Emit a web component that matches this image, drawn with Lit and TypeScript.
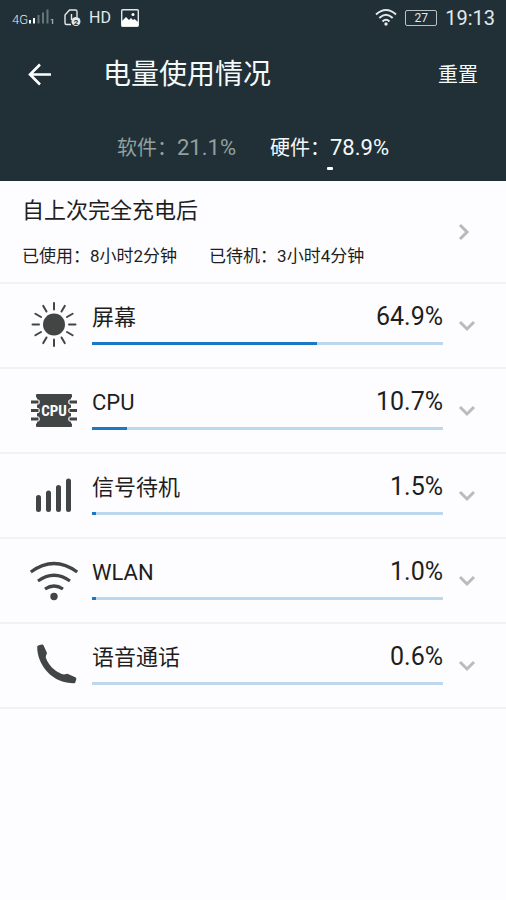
import { LitElement, html, css, svg, nothing } from "lit";
import type { TemplateResult } from "lit";
import { customElement, state } from "lit/decorators.js";
import { classMap } from "lit/directives/class-map.js";
import { styleMap } from "lit/directives/style-map.js";

interface Usage {
  name: string;
  percent: number;
  icon: TemplateResult;
}

const rays = Array.from({ length: 12 }, (_, i) => i * 30);

const screenIcon = html`<svg class="icon" viewBox="0 0 48 48" aria-hidden="true">
  <circle cx="24" cy="23.500" r="11" fill="currentColor" />
  ${rays.map(
    (angle) => svg`<path d="M24 2v6.500" stroke="currentColor" stroke-width="2" stroke-linecap="round" transform="rotate(${angle} 24 23.500)" />`
  )}
</svg>`;

const cpuIcon = html`<svg class="icon" viewBox="0 0 48 48" aria-hidden="true">
  <path d="M7 8h34q1 0 1 1v2l-1 1v25l1 1v2q0 1-1 1H7q-1 0-1-1v-2l1-1V12l-1-1V9q0-1 1-1z" fill="currentColor" />
  <g fill="none" stroke="#fdfcff" stroke-width="5.600" stroke-linecap="round">
    <path d="M2 16h5M2 24.500h5M2 33h5M46 16h-5M46 24.500h-5M46 33h-5" />
  </g>
  <g fill="none" stroke="currentColor" stroke-width="3.200">
    <path d="M1 16h7.500M1 24.500h7.500M1 33h7.500M47 16h-7.500M47 24.500h-7.500M47 33h-7.500" />
  </g>
  <text class="chip" x="24" y="30" text-anchor="middle">CPU</text>
</svg>`;

const signalIcon = html`<svg class="icon" viewBox="0 0 48 48" aria-hidden="true">
  <path d="M8.500 38.500V26.500M18.500 38.500V22M28.500 38.500V16.500M38.500 38.500V10" fill="none" stroke="currentColor" stroke-width="5" stroke-linecap="round" />
</svg>`;

const wlanIcon = html`<svg class="icon" viewBox="0 0 48 48" aria-hidden="true">
  <g fill="none" stroke="currentColor" stroke-width="3.200">
    <path d="M.8 16Q24-1 47.200 16" />
    <path d="M8 25Q24 13.500 40 25" />
    <path d="M15 33Q24 27 33 33" />
  </g>
  <circle cx="24" cy="40.500" r="3.700" fill="currentColor" />
</svg>`;

const callIcon = html`<svg class="icon" viewBox="0 0 48 48" aria-hidden="true">
  <path d="M8.200 4.500 11.700 3.600q1.300-.4 1.900.8l3.200 7.200q.5 1.200-.5 2.100l-.6 2.500C17 21 20.500 25.500 24.500 28.800c3 2.300 6.500 4.300 9.500 4.800l2.200-.6q.8-.4 1.700 0l7.400 3.200q1.300.5 1 1.800L45.400 41.200q-.3 1-1.400 1C35 42.300 24.500 39 17 30.500 10.500 23 7.300 15 7.200 6q0-1.100 1-1.500z" fill="currentColor" />
</svg>`;

const downIcon = html`<svg class="down" viewBox="0 0 18 12" aria-hidden="true">
  <path d="M2 2l7 7 7-7" fill="none" stroke="currentColor" stroke-width="3" />
</svg>`;

@customElement("app-root")
export class AppRoot extends LitElement {
  static styles = css`
    :host {
      display: block;
      min-height: 100vh;
      background: #fdfcff;
      color: #1e1e1e;
      font-family: Roboto, "Noto Sans CJK SC", sans-serif;
    }
    button {
      appearance: none;
      border: 0;
      margin: 0;
      padding: 0;
      background: none;
      color: inherit;
      font: inherit;
      text-align: left;
      cursor: pointer;
    }
    h1 { margin: 0; font-weight: 400; }
    svg { display: block; flex: none; overflow: visible; }
    .head {
      background: #213037;
      color: #f4fafa;
    }
    .status {
      display: flex;
      align-items: center;
      height: 36px;
      padding: 0 11px 0 12px;
      color: #e2e9ea;
    }
    .network { width: 42px; height: 20px; }
    .network-text { font-size: 13px; font-weight: 300; fill: currentColor; }
    .network-index { font-size: 8px; fill: currentColor; }
    .sim { width: 18px; height: 20px; margin-left: 9px; }
    .sim-text { font-size: 8px; font-weight: 700; fill: #213037; }
    .hd { margin-left: 8px; font-size: 16px; line-height: 20px; }
    .photo { width: 18px; height: 18px; margin-left: 10px; }
    .spacer { flex: 1; }
    .wifi { width: 22px; height: 18px; }
    .battery {
      box-sizing: border-box;
      width: 32px;
      height: 16px;
      margin: 0 8px;
      border: 1px solid #b9c3c5;
      border-radius: 2px;
      font-size: 12px;
      line-height: 14px;
      text-align: center;
    }
    .clock { font-size: 20px; line-height: 24px; }
    .bar {
      display: flex;
      align-items: center;
      height: 78px;
      padding: 0 28px;
    }
    .back { width: 24px; height: 24px; color: #fff; }
    .back svg { width: 24px; height: 24px; }
    .title { flex: 1; padding-left: 51px; font-size: 28px; line-height: 40px; }
    .reset { font-size: 20px; line-height: 28px; }
    .tabs {
      display: flex;
      justify-content: center;
      gap: 34px;
      height: 67px;
    }
    .tab {
      display: flex;
      flex-direction: column;
      align-items: center;
      gap: 4px;
      padding-top: 19px;
      font-size: 20px;
      line-height: 30px;
      color: #93a09f;
    }
    .tab.active { color: #f4fafa; }
    .tab.active::after {
      content: "";
      width: 6px;
      height: 3px;
      border-radius: 1px;
      background: #fff;
    }
    .rate { font-size: 22px; }
    .summary {
      display: flex;
      align-items: center;
      box-sizing: border-box;
      width: 100%;
      height: 103px;
      padding: 0 36px 0 22px;
      border-bottom: 2px solid #f2f1f4;
    }
    .facts { flex: 1; }
    .since { display: block; font-size: 22px; line-height: 32px; padding-bottom: 17px; }
    .times { display: flex; gap: 32px; font-size: 17px; line-height: 24px; }
    .next { width: 12px; height: 18px; color: #b9b8bb; }
    .list { margin: 0; padding: 0; list-style: none; }
    .row {
      display: flex;
      align-items: flex-start;
      box-sizing: border-box;
      width: 100%;
      height: 85px;
      padding: 17px 30px 0;
      border-bottom: 2px solid #f2f1f4;
    }
    .icon { width: 48px; height: 48px; color: #414543; }
    .chip { font: 700 15px "Liberation Sans Narrow", "Roboto Condensed", Roboto, sans-serif; fill: #fdfcff; }
    .usage { flex: 1; padding-left: 14px; }
    .line {
      display: flex;
      justify-content: space-between;
      align-items: baseline;
      height: 32px;
      margin-bottom: 9px;
      font-size: 22px;
      line-height: 32px;
    }
    .value { font-size: 25px; }
    .track { display: block; height: 3px; background: #bbd8ec; }
    .fill { display: block; height: 3px; background: #1b78c4; }
    .down { width: 18px; height: 12px; margin: 19px 0 0 15px; color: #bbbabd; }
  `;

  @state() private tab = "硬件";

  private tabs = [
    { name: "软件", rate: "21.1%" },
    { name: "硬件", rate: "78.9%" },
  ];

  private rows: Usage[] = [
    { name: "屏幕", percent: 64.9, icon: screenIcon },
    { name: "CPU", percent: 10.7, icon: cpuIcon },
    { name: "信号待机", percent: 1.5, icon: signalIcon },
    { name: "WLAN", percent: 1.0, icon: wlanIcon },
    { name: "语音通话", percent: 0.6, icon: callIcon },
  ];

  // The bar shows whole percents only.
  private barWidth(percent: number) {
    return `${Math.floor(percent)}%`;
  }

  private renderStatus() {
    return html`<div class="status">
      <svg class="network" viewBox="0 0 42 20">
        <text class="network-text" x="0" y="16">4G</text>
        <g fill="none" stroke-width="2">
          <path d="M18 15.500v-3.500M22 15.500v-5.500" stroke="#fff" />
          <path d="M26.500 15.500V7M31 15.500V4.500M35.500 15.500V1.500" stroke="#66757a" />
        </g>
        <text class="network-index" x="38" y="16">1</text>
      </svg>
      <svg class="sim" viewBox="0 0 18 20">
        <path d="M8 16.500H3.500Q2 16.500 2 15V7l4.500-5H12.500q1.500 0 1.500 1.500V9M8.500 6v6" fill="none" stroke="currentColor" stroke-width="1.400" />
        <circle cx="13" cy="13.500" r="4.500" fill="#e2e9ea" />
        <text class="sim-text" x="13" y="16.500" text-anchor="middle">2</text>
      </svg>
      <span class="hd">HD</span>
      <svg class="photo" viewBox="0 0 18 18">
        <rect x=".7" y=".7" width="16.600" height="16.600" rx="1" fill="none" stroke="currentColor" stroke-width="1.400" />
        <path d="M1 12l4-4 3 3 2-2 2 2 1.500-1L17 13v4H1z" fill="#fff" />
        <circle cx="12" cy="5.500" r="1.500" fill="#fff" />
      </svg>
      <span class="spacer"></span>
      <svg class="wifi" viewBox="0 0 22 18">
        <g fill="none" stroke="currentColor" stroke-width="2">
          <path d="M1 5.500Q11-3.500 21 5.500M4.300 9Q11 2.500 17.700 9M7.500 12.500Q11 9 14.500 12.500" />
        </g>
        <circle cx="11" cy="15" r="1.700" fill="currentColor" />
      </svg>
      <span class="battery">27</span>
      <span class="clock">19:13</span>
    </div>`;
  }

  render() {
    return html`
      <header class="head" lang="zh-CN">
        ${this.renderStatus()}
        <div class="bar">
          <button class="back" aria-label="返回">
            <svg viewBox="0 0 24 24" fill="none" stroke="currentColor" stroke-width="2.600">
              <path d="M12 1.500 2 11.500 12 21.500M2 11.500h21" />
            </svg>
          </button>
          <h1 class="title">电量使用情况</h1>
          <button class="reset">重置</button>
        </div>
        <nav class="tabs">
          ${this.tabs.map(
            (t) => html`<button
              class=${classMap({ tab: true, active: t.name === this.tab })}
              aria-current=${t.name === this.tab ? "page" : nothing}
              @click=${() => (this.tab = t.name)}
            ><span>${t.name}：<span class="rate">${t.rate}</span></span></button>`
          )}
        </nav>
      </header>
      <main lang="zh-CN">
        <button class="summary">
          <span class="facts">
            <span class="since">自上次完全充电后</span>
            <span class="times"><span>已使用：8小时2分钟</span><span>已待机：3小时4分钟</span></span>
          </span>
          <svg class="next" viewBox="0 0 12 18" aria-hidden="true">
            <path d="M2 2l7 7-7 7" fill="none" stroke="currentColor" stroke-width="3" />
          </svg>
        </button>
        <ul class="list">
          ${this.rows.map(
            (r) => html`<li>
              <button class="row">
                ${r.icon}
                <span class="usage">
                  <span class="line"><span>${r.name}</span><span class="value">${r.percent.toFixed(1)}%</span></span>
                  <span class="track"><span class="fill" style=${styleMap({ width: this.barWidth(r.percent) })}></span></span>
                </span>
                ${downIcon}
              </button>
            </li>`
          )}
        </ul>
      </main>
    `;
  }
}
